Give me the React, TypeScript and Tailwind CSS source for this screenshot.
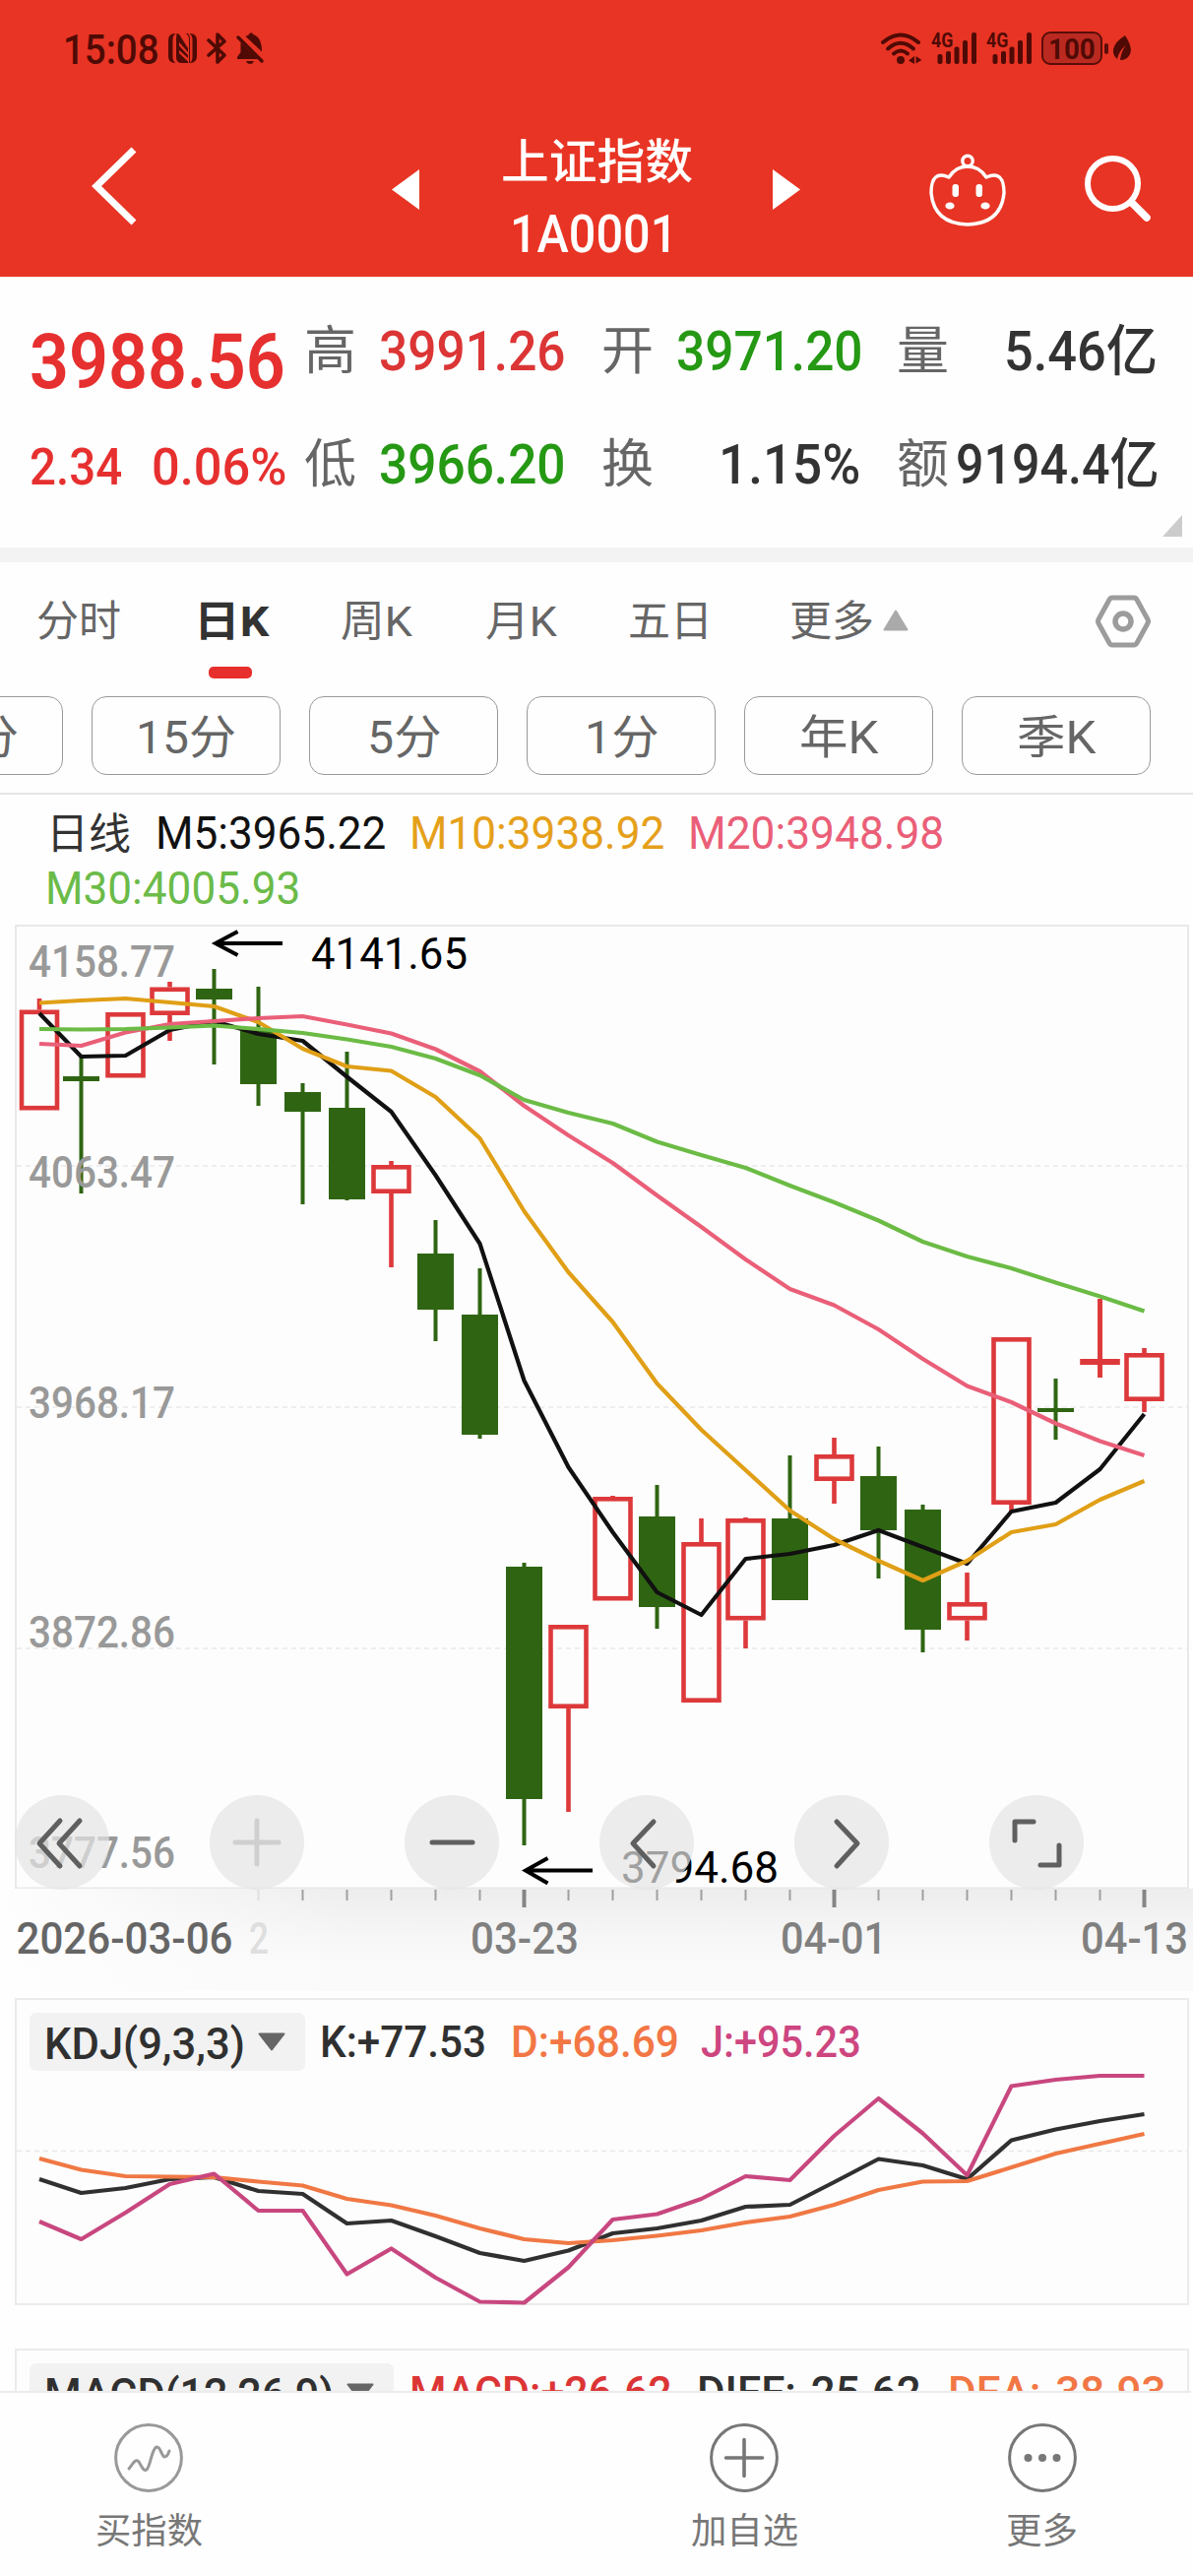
import { useLayoutEffect, useRef, useState } from "react";

/** Text squeezed or stretched horizontally to an exact advance width. */
function Fit({ w, className = "", children }: { w: number; className?: string; children: string }) {
  const ref = useRef<HTMLSpanElement>(null);
  const [scale, setScale] = useState(1);
  useLayoutEffect(() => {
    if (ref.current && ref.current.offsetWidth) setScale(w / ref.current.offsetWidth);
  }, [w, children]);
  return (
    <span className={`block shrink-0 whitespace-nowrap leading-none ${className}`} style={{ width: w }}>
      <span ref={ref} className="inline-block origin-left" style={{ transform: `scaleX(${scale})` }}>
        {children}
      </span>
    </span>
  );
}

const X0 = 82.5;
const STEP = 45;
const cx = (i: number) => (i === 0 ? 40 : X0 + STEP * (i - 1));

// kind, high, low, body top, body bottom (page pixels)
type Candle = ["r" | "g", number, number, number, number];
const candles: Candle[] = [
  ["r", 1014, 1127, 1025.5, 1127.5],
  ["g", 1073, 1212, 1093, 1098],
  ["r", 1028, 1094, 1028, 1094.5],
  ["r", 997, 1057, 1002.5, 1031],
  ["g", 984, 1081, 1004, 1015],
  ["g", 1002, 1123, 1045, 1101],
  ["g", 1100, 1223, 1109, 1129],
  ["g", 1068, 1219, 1125, 1218],
  ["r", 1179, 1287, 1183, 1212],
  ["g", 1239, 1362, 1273, 1330],
  ["g", 1288, 1461, 1335, 1457],
  ["g", 1587, 1874, 1591, 1827],
  ["r", 1650, 1840, 1650, 1735],
  ["r", 1519, 1625, 1520, 1625.5],
  ["g", 1508, 1654, 1540, 1632],
  ["r", 1542, 1729, 1566, 1729],
  ["r", 1541, 1674, 1542, 1645.5],
  ["g", 1478, 1625, 1542, 1625],
  ["r", 1460, 1527, 1477, 1504],
  ["g", 1469, 1603, 1499, 1554],
  ["g", 1528, 1678, 1533, 1655],
  ["r", 1597, 1666, 1627, 1645.5],
  ["r", 1358, 1535, 1358, 1528],
  ["g", 1400, 1462, 1430, 1434],
  ["r", 1319, 1399, 1380, 1386],
  ["r", 1369, 1434, 1374, 1423],
];

const m5 = [1029, 1073, 1072, 1046, 1037, 1050, 1057, 1093.5, 1129, 1193.5, 1263, 1402, 1490, 1556, 1617, 1640, 1583, 1578, 1569, 1554, 1571, 1588, 1535, 1526, 1492, 1436];
const m10 = [1018.5, 1016, 1014, 1018, 1022, 1038, 1065, 1083, 1087.5, 1114, 1156, 1230, 1292, 1342.5, 1405, 1452, 1493, 1534, 1563, 1585, 1605, 1585, 1556, 1548, 1523, 1504];
const m20 = [1060, 1062, 1048.5, 1040, 1037, 1034, 1032, 1040.5, 1049.5, 1065.5, 1088, 1123, 1153, 1181, 1214, 1246, 1279, 1309, 1325.5, 1350, 1380, 1407.5, 1424, 1445.5, 1463.5, 1478];
const m30 = [1045, 1045.5, 1045, 1043.5, 1041.5, 1045, 1049, 1055.5, 1063, 1075, 1092, 1117, 1130, 1141, 1159.5, 1173, 1186, 1204, 1221, 1239.5, 1261, 1276, 1288, 1302.5, 1316.5, 1331.5];

const kLine = [2213, 2227, 2222, 2213, 2211, 2225, 2228, 2258, 2255, 2271, 2288, 2296, 2285.5, 2268, 2263, 2255, 2241, 2239, 2216, 2192.5, 2199, 2213, 2173.5, 2162.5, 2154, 2147];
const dLine = [2192, 2203.5, 2210, 2210.5, 2211, 2215.5, 2219.5, 2233, 2239.5, 2250, 2263, 2274, 2278, 2275, 2270.5, 2265, 2257, 2251, 2239, 2224, 2215.5, 2215, 2201, 2187, 2177, 2167];
const jLine = [2256, 2274, 2247, 2218, 2207.5, 2245, 2245, 2309.5, 2283.5, 2313, 2337.5, 2338.5, 2302.5, 2254, 2248.5, 2233, 2210, 2214, 2169, 2131, 2166.5, 2209, 2118.5, 2112, 2108, 2108];

const pts = (ys: number[]) => ys.map((y, i) => `${cx(i)},${y}`).join(" ");

function Series({ ys, color, width = 4.2 }: { ys: number[]; color: string; width?: number }) {
  return <polyline points={pts(ys)} fill="none" stroke={color} strokeWidth={width} strokeLinejoin="round" />;
}

function CandleMark({ c, i }: { c: Candle; i: number }) {
  const [kind, hi, lo, top, bot] = c;
  const x = cx(i);
  if (kind === "g") {
    return (
      <g fill="#2f6512">
        <rect x={x - 2} y={hi} width={4} height={lo - hi} />
        <rect x={x - 18.5} y={top} width={37} height={bot - top} />
      </g>
    );
  }
  return (
    <g fill="#dd393b">
      {hi < top && <rect x={x - 2.3} y={hi} width={4.6} height={top - hi} />}
      {lo > bot && <rect x={x - 2.3} y={bot} width={4.6} height={lo - bot} />}
      {bot - top < 8 ? (
        <>
          <rect x={x - 20.3} y={top} width={40.6} height={bot - top} />
          <rect x={x - 2.3} y={hi} width={4.6} height={lo - hi} />
        </>
      ) : (
        <rect x={x - 18} y={top + 2.3} width={36} height={bot - top - 4.6} fill="none" stroke="#dd393b" strokeWidth={4.6} />
      )}
    </g>
  );
}

function StatusBar() {
  return (
    <div className="flex h-[98px] items-center pl-[64px] pr-[63px] text-[#4f0a05]">
      <Fit w={98} className="mt-[3px] text-[42px] font-medium">15:08</Fit>
      <svg className="ml-[9px] shrink-0" width="29" height="30" viewBox="0 0 29 30" fill="currentColor">
        <path d="M7 0h.5q-3 2-3 6v18q0 4 3 6H7q-7 0-7-7V7Q0 0 7 0Z" />
        <path d="M22 30h-.5q3-2 3-6V6q0-4-3-6h.5q7 0 7 7v16q0 7-7 7Z" />
        <path d="M8.500 0q3 0 4.500 4l7 11v4l-9-10v3.500l9 9.500V25l-9-8v3l9 8.500V30h-6q-6 0-6-6V5Z" />
        <path d="M22 30V5q0-3-2-5h-2q3 2 3 6v24Z" />
      </svg>
      <svg className="ml-[10px] shrink-0" width="20" height="32" viewBox="0 0 20 32" fill="none" stroke="currentColor" strokeWidth="3.6" strokeLinejoin="round" strokeLinecap="round">
        <path d="M2 8 18 23 11 30V2l7 7L2 23" />
      </svg>
      <svg className="ml-[10px] shrink-0" width="28" height="32" viewBox="0 0 28 32" fill="currentColor">
        <path d="M9.500 4q1-1 3-1.500Q15-1.500 17.500 2 26 5 26 19.500L9.500 4Z" />
        <path d="M4.500 10 22 27H1v-2l3.500-5V10Z" />
        <path d="M10 29h8q-1 3-4 3t-4-3Z" />
        <path d="M2 5 26 29" stroke="currentColor" strokeWidth="3.4" strokeLinecap="round" />
      </svg>
      <div className="ml-auto flex items-center">
        <svg className="shrink-0" width="41" height="32" viewBox="0 0 41 32" fill="none" stroke="currentColor" strokeWidth="4" strokeLinecap="round">
          <path d="M2 10Q20-5 38 10" />
          <path d="M7 16.500Q20 5 33 16.500" />
          <path d="M13 21.500Q20 15.500 27 21.500" />
          <circle cx="20" cy="28" r="4" fill="currentColor" stroke="none" />
          <path d="m34 24-6 4.500 6 3.500zM35.500 24l6 4-6 3.500z" fill="currentColor" stroke="none" />
        </svg>
        <Signal />
        <Signal />
        <div className="ml-[10px] flex h-[34px] w-[62px] items-center justify-center rounded-[9px] border-[2.500px] border-[#5a0d08] bg-[#bb2a21]">
          <Fit w={48} className="mt-[1px] text-[30px] font-bold">100</Fit>
        </div>
        <div className="ml-[2px] h-[11px] w-[4px] rounded-full bg-[#5a0d08]" />
        <svg className="ml-[5px] shrink-0" width="18" height="26" viewBox="0 0 18 26" fill="currentColor">
          <path d="M12 0q8 12 5 19-3 6-10 6 1-9 6-15-7 5-9 14-5-4-4-10Q2 6 12 0Z" />
        </svg>
      </div>
    </div>
  );
}

function Signal() {
  return (
    <div className="relative ml-[10px] h-[32px] w-[46px] shrink-0">
      <Fit w={22} className="absolute left-0 top-[-2px] text-[21px] font-bold">4G</Fit>
      <svg className="absolute inset-0" width="46" height="32" viewBox="0 0 46 32" fill="currentColor">
        <rect x="6.500" y="22" width="5" height="10" rx="2" />
        <rect x="15" y="19" width="5" height="13" rx="2" />
        <rect x="23.500" y="14.500" width="5" height="17.500" rx="2" />
        <rect x="32" y="8" width="5" height="24" rx="2" />
        <rect x="41" y="0" width="5" height="32" rx="2" />
      </svg>
    </div>
  );
}

function NavBar() {
  return (
    <div className="flex h-[183px] items-start pl-[93px] text-white">
      <svg className="mt-[51px] shrink-0" width="46" height="80" viewBox="0 0 46 80" fill="none" stroke="currentColor" strokeWidth="7">
        <path d="M43 3 5 40l38 37" />
      </svg>
      <svg className="ml-[259px] mt-[74px] shrink-0" width="28" height="41" viewBox="0 0 28 41" fill="currentColor">
        <path d="M28 0v41L0 20.500Z" />
      </svg>
      <div className="ml-[83px] flex w-[194px] flex-col items-center pt-[43px]">
        <Fit w={195} className="text-[48px] font-medium">上证指数</Fit>
        <Fit w={170} className="mt-[22px] -ml-[7px] text-[54px] font-medium">1A0001</Fit>
      </div>
      <svg className="ml-[82px] mt-[74px] shrink-0" width="28" height="41" viewBox="0 0 28 41" fill="currentColor">
        <path d="M0 0v41l28-20.500Z" />
      </svg>
      <svg className="ml-[131px] mt-[58px] shrink-0" width="78" height="74" viewBox="0 0 78 74" fill="none" stroke="currentColor" strokeWidth="3.400" strokeLinejoin="round">
        <circle cx="39" cy="7.500" r="5.200" />
        <path d="M20 24Q27 13 39 13t19 11q18-8 18 16Q73 71 39 72 5 71 2 40 2 16 20 24Z" />
        <rect x="23.500" y="31" width="6.500" height="13" rx="3" fill="currentColor" stroke="none" />
        <rect x="47.500" y="31" width="6.500" height="13" rx="3" fill="currentColor" stroke="none" />
        <ellipse cx="21" cy="53" rx="4.600" ry="3.600" fill="currentColor" stroke="none" />
        <ellipse cx="57" cy="53" rx="4.600" ry="3.600" fill="currentColor" stroke="none" />
      </svg>
      <svg className="ml-[80px] mt-[60px] shrink-0" width="68" height="68" viewBox="0 0 68 68" fill="none" stroke="currentColor" strokeLinecap="round">
        <circle cx="28.500" cy="28.500" r="25.500" strokeWidth="6" />
        <path d="m48 48 15 15" strokeWidth="7.500" />
      </svg>
    </div>
  );
}

function Quote() {
  return (
    <section className="relative flex h-[275px] bg-[#fefefe] text-[56px] font-medium text-[#333]">
      <div className="flex w-[309px] shrink-0 flex-col pl-[30px] text-[#e6302f]">
        <div className="mt-[48px] flex h-[78px] items-center">
          <Fit w={260} className="text-[77px] font-semibold">3988.56</Fit>
        </div>
        <div className="mt-[40px] flex h-[56px] items-center text-[52px]">
          <Fit w={94}>2.34</Fit>
          <Fit w={137} className="ml-[30px]">0.06%</Fit>
        </div>
      </div>
      <div className="flex flex-col">
        <div className="mt-[47px] flex h-[58px] items-center">
          <Fit w={53} className="text-[53px] font-normal text-[#666]">高</Fit>
          <Fit w={190} className="ml-[23px] text-[#dc3535]">3991.26</Fit>
          <Fit w={53} className="ml-[36px] text-[53px] font-normal text-[#666]">开</Fit>
          <Fit w={190} className="ml-[23px] text-[#259814]">3971.20</Fit>
          <Fit w={53} className="ml-[34px] text-[53px] font-normal text-[#666]">量</Fit>
          <Fit w={156} className="ml-[56px]">5.46亿</Fit>
        </div>
        <div className="mt-[57px] flex h-[58px] items-center">
          <Fit w={53} className="text-[53px] font-normal text-[#666]">低</Fit>
          <Fit w={190} className="ml-[23px] text-[#259814]">3966.20</Fit>
          <Fit w={53} className="ml-[36px] text-[53px] font-normal text-[#666]">换</Fit>
          <Fit w={144} className="ml-[66px]">1.15%</Fit>
          <Fit w={53} className="ml-[37px] text-[53px] font-normal text-[#666]">额</Fit>
          <Fit w={207} className="ml-[7px]">9194.4亿</Fit>
        </div>
      </div>
      <svg className="absolute bottom-[11px] right-[11px]" width="20" height="22" viewBox="0 0 20 22">
        <path d="M20 0v22H0Z" fill="#ccc" />
      </svg>
    </section>
  );
}

function Tabs() {
  return (
    <section className="border-b-2 border-[#e5e5e5] bg-[#fefefe]">
      <div className="flex h-[118px] items-center pl-[37px] text-[43px] text-[#666]">
        <Fit w={86} className="mt-[3px]">分时</Fit>
        <div className="relative ml-[74px] mt-[3px]">
          <Fit w={76} className="font-bold text-[#333]">日K</Fit>
          <div className="absolute left-[15px] top-[67px] h-[12px] w-[44px] rounded-[5px] bg-[#e72f2e]" />
        </div>
        <Fit w={73} className="ml-[73px] mt-[3px]">周K</Fit>
        <Fit w={73} className="ml-[74px] mt-[3px]">月K</Fit>
        <Fit w={86} className="ml-[72px] mt-[3px]">五日</Fit>
        <Fit w={86} className="ml-[78px] mt-[3px]">更多</Fit>
        <svg className="ml-[9px]" width="26" height="22" viewBox="0 0 26 22">
          <path d="M13 1.500 24.500 20.500H1.500Z" fill="#aaa" stroke="#aaa" strokeWidth="2" strokeLinejoin="round" />
        </svg>
        <svg className="ml-[190px] mt-[2px]" width="56" height="54" viewBox="0 0 56 54" fill="none" stroke="#9c9c9c" strokeLinejoin="round">
          <path d="M17 3h22q2 0 3 2l11 20q1 2 0 4L42 49q-1 2-3 2H17q-2 0-3-2L3 29q-1-2 0-4L14 5q1-2 3-2Z" strokeWidth="5" />
          <circle cx="28" cy="27" r="8" strokeWidth="5.500" />
        </svg>
      </div>
      <div className="mt-[18px] flex gap-[29px] overflow-hidden pb-[18px] text-[47px] text-[#666]">
        {[
          ["30分", 102],
          ["15分", 102],
          ["5分", 75],
          ["1分", 75],
          ["年K", 81],
          ["季K", 81],
        ].map(([t, w], i) => (
          <div
            key={t}
            className={`flex h-[80px] w-[192px] shrink-0 items-center justify-center rounded-[15px] border border-[#999] pt-[2px] ${i === 0 ? "-ml-[128px]" : ""}`}
          >
            <Fit w={w as number}>{t as string}</Fit>
          </div>
        ))}
      </div>
    </section>
  );
}

function Legend() {
  return (
    <div className="h-[132px] pl-[47px] pt-[16px] text-[46px]">
      <div className="flex h-[46px] items-center">
        <Fit w={86} className="mt-[2px] text-[43px] text-[#333]">日线</Fit>
        <Fit w={234} className="ml-[25px] text-[#111]">M5:3965.22</Fit>
        <Fit w={259} className="ml-[24px] text-[#e5a01a]">M10:3938.92</Fit>
        <Fit w={260} className="ml-[24px] text-[#ea5f78]">M20:3948.98</Fit>
      </div>
      <div className="mt-[10px] flex h-[46px] items-center">
        <Fit w={259} className="-ml-[1px] text-[#6bbb49]">M30:4005.93</Fit>
      </div>
    </div>
  );
}

const levels: [string, number][] = [
  ["4158.77", 992],
  ["4063.47", 1206],
  ["3968.17", 1440],
  ["3872.86", 1673],
  ["3777.56", 1897],
];

const tools = [
  <path d="M46 26 25 49l21 23M66 26 45 49l21 23" />,
  <path d="M48 26v44M26 48h44" stroke="#cfcfcf" />,
  <path d="M28 48h41" />,
  <path d="M55 27 34 49l21 23" />,
  <path d="M43 27 64 49 43 72" />,
  <path d="M26 46V27h19M71 51v20H52" />,
];

function PriceChart() {
  return (
    <div className="relative h-[979px]">
      <svg className="block" width="1212" height="979" viewBox="0 939 1212 979">
        <rect x="16" y="940" width="1191" height="977.500" fill="#fdfdfd" stroke="#e9e9e9" strokeWidth="2" />
        {[1184, 1429, 1674].map((y) => (
          <path key={y} d={`M17 ${y}H1206`} stroke="#e9e9e9" strokeWidth="1.500" strokeDasharray="5 4" />
        ))}
        {candles.map((c, i) => (
          <CandleMark key={i} c={c} i={i} />
        ))}
        <Series ys={m5} color="#111" />
        <Series ys={m10} color="#e09f16" />
        <Series ys={m20} color="#ea5f78" />
        <Series ys={m30} color="#6bbb45" />
        {levels.map(([t, y]) => (
          <text key={t} x="29" y={y} fontSize="45" fontWeight="500" fill="#999" textLength="149" lengthAdjust="spacingAndGlyphs">
            {t}
          </text>
        ))}
        <g fill="none" stroke="#000" strokeWidth="4">
          <path d="M287 958H219M241.500 946 219 958l22.500 12" />
          <path d="M602 1899.500H535M556.500 1887 534 1899.500l22.500 13" />
        </g>
        <text x="316" y="984" fontSize="45" fill="#000" textLength="159" lengthAdjust="spacingAndGlyphs">4141.65</text>
        <text x="631" y="1912" fontSize="45" fill="#000" textLength="160" lengthAdjust="spacingAndGlyphs">3794.68</text>
      </svg>
      <div className="absolute bottom-[-1px] left-[15px] flex gap-[102px]">
        {tools.map((icon, i) => (
          <div key={i} className="h-[96px] w-[96px] rounded-full bg-[#e4e4e4]/70">
            <svg width="96" height="96" viewBox="0 0 96 96" fill="none" stroke="#5f5f5f" strokeWidth="5" strokeLinecap="round" strokeLinejoin="round">
              {icon}
            </svg>
          </div>
        ))}
      </div>
    </div>
  );
}

function DateAxis() {
  return (
    <div className="h-[104px] bg-[linear-gradient(to_right,#fefefe_0,#fefefe00_360px),linear-gradient(to_bottom,#ededed_0,#f6f6f6_45%,#fafafa_75%,#fafafa_100%)]">
      <svg className="block" width="1212" height="104" viewBox="0 1918 1212 104" fontWeight="500" fontSize="45" fill="#808080">
        {candles.map((_, i) => {
          if (i < 5) return null;
          const major = i === 11 || i === 18 || i === 25;
          return (
            <rect
              key={i}
              x={cx(i) - (major ? 2 : 1)}
              y={1919}
              width={major ? 4 : 2}
              height={major ? 18 : 11}
              fill={i === 5 ? "#e0e0e0" : major ? "#858585" : "#a0a0a0"}
            />
          );
        })}
        <text x="16.500" y="1984" fill="#666" textLength="220" lengthAdjust="spacingAndGlyphs">2026-03-06</text>
        <text x="253" y="1984" fill="#dedede" textLength="20" lengthAdjust="spacingAndGlyphs">2</text>
        <text x="478" y="1984" textLength="110" lengthAdjust="spacingAndGlyphs">03-23</text>
        <text x="793" y="1984" textLength="108" lengthAdjust="spacingAndGlyphs">04-01</text>
        <text x="1098" y="1984" textLength="109" lengthAdjust="spacingAndGlyphs">04-13</text>
      </svg>
    </div>
  );
}

function Chip({ label, w, className }: { label: string; w: number; className: string }) {
  return (
    <div className={`flex h-[59px] shrink-0 items-center rounded-[7px] bg-[#f2f2f2] pl-[15px] ${className}`}>
      <Fit w={w} className="mt-[4px]">{label}</Fit>
      <svg className="ml-[13px]" width="28" height="19" viewBox="0 0 28 19">
        <path d="M1.500 1.500h25L14 17.500Z" fill="#666" stroke="#666" strokeWidth="2" strokeLinejoin="round" />
      </svg>
    </div>
  );
}

function Kdj() {
  return (
    <div className="mt-[7px] ml-[15px] h-[312px] w-[1193px] border-2 border-[#ebebeb] bg-[#fdfdfd]">
      <div className="flex h-[75px] items-start pl-[13px] pt-[13px] text-[45px] font-medium text-[#303030]">
        <Chip label="KDJ(9,3,3)" w={204} className="w-[280px]" />
        <div className="flex h-[59px] items-center">
          <Fit w={169} className="ml-[15px]">K:+77.53</Fit>
          <Fit w={171} className="ml-[25px] text-[#f27745]">D:+68.69</Fit>
          <Fit w={163} className="ml-[22px] text-[#cd4680]">J:+95.23</Fit>
        </div>
      </div>
      <svg className="block overflow-visible" width="1189" height="233" viewBox="17 2106 1189 233">
        <path d="M17 2184.500H1206" stroke="#e9e9e9" strokeWidth="1.500" strokeDasharray="5 4" />
        <Series ys={kLine} color="#303030" />
        <Series ys={dLine} color="#f07844" />
        <Series ys={jLine} color="#c8477f" />
      </svg>
    </div>
  );
}

function Macd() {
  return (
    <div className="mt-[44px] ml-[15px] h-[43px] w-[1193px] overflow-hidden border-2 border-b-0 border-[#ebebeb] bg-[#fdfdfd]">
      <div className="flex items-start pl-[13px] pt-[13px] text-[45px] font-medium text-[#303030]">
        <Chip label="MACD(12,26,9)" w={294} className="w-[370px]" />
        <div className="flex h-[59px] items-center">
          <Fit w={267} className="ml-[16px] text-[#dc3535]">MACD:+26.62</Fit>
          <Fit w={228} className="ml-[25px]">DIFF:-25.62</Fit>
          <Fit w={222} className="ml-[27px] text-[#f27745]">DEA:-38.93</Fit>
        </div>
      </div>
    </div>
  );
}

function BottomBar() {
  return (
    <nav className="grid h-[188px] w-[1210px] grid-cols-4 border-t-2 border-[#ececec] bg-[#fefefe] text-[36px] text-[#777]">
      <div className="flex flex-col items-center pt-[31px]">
        <svg width="70" height="70" viewBox="0 0 70 70" fill="none" stroke="#999" strokeWidth="3" strokeLinecap="round">
          <circle cx="35" cy="35" r="33.400" />
          <path d="M15 46c4-5 7-11 10-7 3 5 5 10 8 8 4-4 5-21 10-23 4-1 5 9 8 10 2 0 4-3 5-6" />
        </svg>
        <Fit w={109} className="mt-[22px]">买指数</Fit>
      </div>
      <div />
      <div className="flex flex-col items-center pt-[31px]">
        <svg width="70" height="70" viewBox="0 0 70 70" fill="none" stroke="#777" strokeWidth="3" strokeLinecap="round">
          <circle cx="35" cy="35" r="33.400" />
          <path d="M35 16.500v37M16.500 35h37" strokeWidth="3.600" />
        </svg>
        <Fit w={109} className="mt-[22px]">加自选</Fit>
      </div>
      <div className="flex flex-col items-center pt-[31px]">
        <svg width="70" height="70" viewBox="0 0 70 70" fill="none" stroke="#777" strokeWidth="3">
          <circle cx="35" cy="35" r="33.400" />
          <g fill="#777" stroke="none">
            <circle cx="20.500" cy="35" r="4" />
            <circle cx="35" cy="35" r="4" />
            <circle cx="49.500" cy="35" r="4" />
          </g>
        </svg>
        <Fit w={73} className="mt-[22px]">更多</Fit>
      </div>
    </nav>
  );
}

export default function App() {
  return (
    <div className="h-[2616px] w-[1212px] overflow-hidden bg-[#fefefe] font-['Roboto','Noto_Sans_CJK_SC',sans-serif]">
      <header className="h-[281px] bg-[#e83424]">
        <StatusBar />
        <NavBar />
      </header>
      <Quote />
      <div className="h-[15px] bg-[#f3f3f3]" />
      <Tabs />
      <Legend />
      <PriceChart />
      <DateAxis />
      <Kdj />
      <Macd />
      <BottomBar />
    </div>
  );
}
